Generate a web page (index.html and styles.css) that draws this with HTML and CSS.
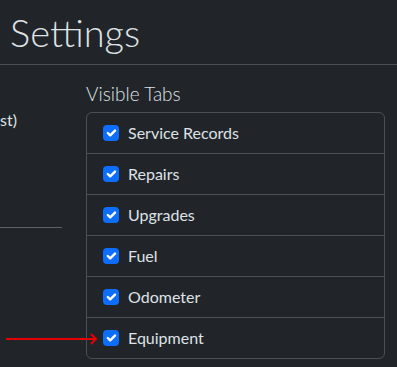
FILE: index.html
```html
<!DOCTYPE html>
<html>
<head>
<meta charset="utf-8">
<link rel="stylesheet" href="styles.css">
</head>
<body>
<header class="page-header">
  <h1 class="title">Settings</h1>
</header>
<main class="settings">
  <section class="col-left">
    <p class="option-text">st)</p>
    <hr class="divider">
  </section>
  <section class="col-right">
    <h2 class="section-title">Visible Tabs</h2>
    <ul class="list">
      <li class="item"><span class="check"><svg viewBox="0 0 20 20"><path d="m6 10 3 3 6-6"/></svg></span>Service Records</li>
      <li class="item"><span class="check"><svg viewBox="0 0 20 20"><path d="m6 10 3 3 6-6"/></svg></span>Repairs</li>
      <li class="item"><span class="check"><svg viewBox="0 0 20 20"><path d="m6 10 3 3 6-6"/></svg></span>Upgrades</li>
      <li class="item"><span class="check"><svg viewBox="0 0 20 20"><path d="m6 10 3 3 6-6"/></svg></span>Fuel</li>
      <li class="item"><span class="check"><svg viewBox="0 0 20 20"><path d="m6 10 3 3 6-6"/></svg></span>Odometer</li>
      <li class="item"><span class="check"><svg viewBox="0 0 20 20"><path d="m6 10 3 3 6-6"/></svg></span>Equipment</li>
    </ul>
  </section>
</main>
<svg class="arrow" width="100" height="16" viewBox="0 0 100 16"><path d="M6 8 H96 M91 3 L96 8 L91 13" fill="none" stroke="#e60000" stroke-width="2"/></svg>
</body>
</html>
```

FILE: styles.css
```css
* { box-sizing: border-box; }
html, body { margin: 0; padding: 0; }
body {
  background: #212529;
  color: #dee2e6;
  font-family: "Segoe UI", Lato, "Noto Sans", sans-serif;
  font-size: 16px;
  line-height: 1.5;
  width: 397px;
  height: 367px;
  overflow: hidden;
  position: relative;
}
.page-header {
  height: 65px;
  border-bottom: 1px solid #4a4f55;
  padding: 8px 0 0 10px;
}
.title {
  margin: 0;
  font-size: 38px;
  font-weight: 300;
  line-height: 48px;
}
.settings {
  display: flex;
  gap: 24px;
}
.col-left {
  width: 62px;
  padding-top: 43px;
}
.option-text {
  margin: 0;
  line-height: 24px;
}
.divider {
  margin: 95px 0 0;
  border: 0;
  border-top: 1px solid #5c6167;
}
.col-right {
  width: 299px;
  padding-top: 17px;
}
.section-title {
  margin: 0 0 6px;
  font-size: 19px;
  font-weight: 300;
  line-height: 24px;
}
.list {
  list-style: none;
  margin: 0;
  padding: 0;
  border: 1px solid #495057;
  border-radius: 6px;
}
.item {
  display: flex;
  align-items: center;
  height: 41px;
  padding: 0 16px;
  border-top: 1px solid #495057;
}
.item:first-child { border-top: 0; height: 40px; }
.check {
  width: 16px;
  height: 16px;
  margin-right: 9px;
  border-radius: 4px;
  background: #0d6efd;
  display: flex;
}
.check svg {
  width: 16px;
  height: 16px;
  fill: none;
  stroke: #fff;
  stroke-width: 3;
  stroke-linecap: round;
  stroke-linejoin: round;
}
.arrow {
  position: absolute;
  left: 0;
  top: 331px;
}
```
